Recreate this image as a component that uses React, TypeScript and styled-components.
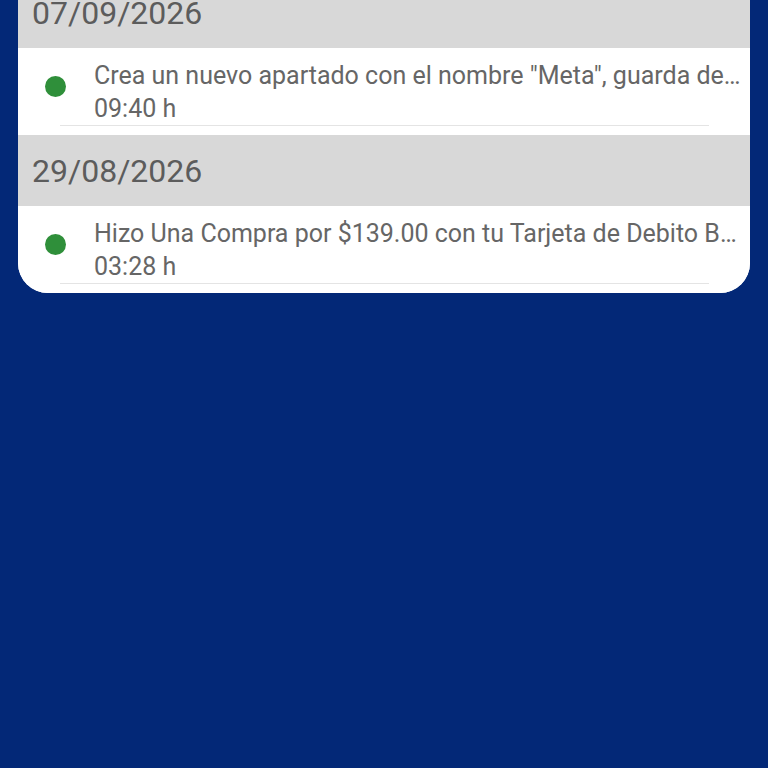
import React from "react"
import styled, { createGlobalStyle } from "styled-components"

const GlobalStyle = createGlobalStyle`
    html, body {
        margin: 0;
        padding: 0;
        background-color: #032877;
        font-family: Roboto, "Noto Sans", Arial, sans-serif;
    }
`

type Movement = {
    text: string
    time: string
}

type Group = {
    date: string
    items: Movement[]
}

const groups: Group[] = [
    {
        date: "07/09/2026",
        items: [
            { text: 'Crea un nuevo apartado con el nombre "Meta", guarda dentro de tus apartados', time: "09:40 h" },
        ],
    },
    {
        date: "29/08/2026",
        items: [
            { text: "Hizo Una Compra por $139.00 con tu Tarjeta de Debito BBVA terminada en 1234", time: "03:28 h" },
        ],
    },
]

export default function App() {
    return (
        <Page>
            <GlobalStyle />
            <Card>
                {groups.map((group) => (
                    <section key={group.date}>
                        <DateHeader>{group.date}</DateHeader>
                        {group.items.map((item) => (
                            <Row key={item.text}>
                                <RowContent>
                                    <Dot />
                                    <RowText>
                                        <Title>{item.text}</Title>
                                        <Time>{item.time}</Time>
                                    </RowText>
                                </RowContent>
                                <Divider />
                            </Row>
                        ))}
                    </section>
                ))}
            </Card>
        </Page>
    )
}

const Page = styled.div`
    min-height: 768px;
    padding: 0 18px;
    overflow: hidden;
`

const Card = styled.div`
    margin-top: -23px;
    background-color: #ffffff;
    border-radius: 0 0 30px 30px;
    overflow: hidden;
`

const DateHeader = styled.div`
    display: flex;
    align-items: center;

    height: 71px;
    padding-left: 14px;

    background-color: #d8d8d8;
    color: #5c5c5c;
    font-size: 32px;
`

const Row = styled.div`
    padding: 11px 0 9px;
    background-color: #ffffff;
`

const RowContent = styled.div`
    display: flex;
    align-items: flex-start;
`

const Dot = styled.span`
    flex-shrink: 0;

    width: 21px;
    height: 21px;
    margin: 17px 28px 0 27px;

    border-radius: 50%;
    background-color: #2f8f3a;
`

const RowText = styled.div`
    flex: 1;
    min-width: 0;
    padding-right: 7px;
`

const Title = styled.div`
    overflow: hidden;
    white-space: nowrap;
    text-overflow: ellipsis;

    color: #666666;
    font-size: 25px;
    line-height: 33px;
`

const Time = styled.div`
    color: #666666;
    font-size: 25px;
    line-height: 33px;
`

const Divider = styled.div`
    height: 1px;
    margin: 0 41px 0 42px;
    background-color: #e4e4e4;
`
